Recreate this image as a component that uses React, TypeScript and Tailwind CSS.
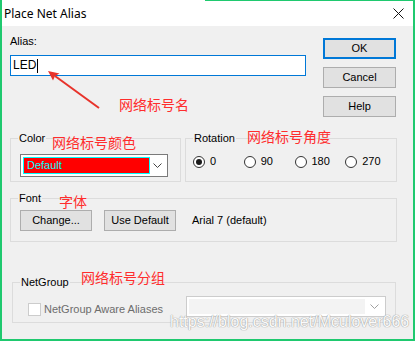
import type { ReactNode } from 'react';

const ui = "font-['Liberation_Sans',Arial,sans-serif] text-[11px] leading-[13px]";
const cjk = "font-['Noto_Sans_CJK_SC',sans-serif] text-[14px] leading-[16px] text-[#ff2d2d]";

function Group({ label, className, children }: { label: string; className: string; children?: ReactNode }) {
  return (
    <div className={`relative border border-[#dcdcdc] ${className}`}>
      <span className="absolute -top-[7px] left-[7px] bg-[#f0f0f0] px-[1px] text-black">{label}</span>
      {children}
    </div>
  );
}

function Btn({ children, primary, className = '' }: { children: ReactNode; primary?: boolean; className?: string }) {
  return (
    <div
      className={`flex h-[21px] items-center justify-center bg-[#e1e1e1] text-black ${
        primary ? 'border-2 border-[#0078d7]' : 'border border-[#adadad]'
      } ${className}`}
    >
      {children}
    </div>
  );
}

function Chevron({ color }: { color: string }) {
  return (
    <svg width="9" height="5" viewBox="0 0 9 5">
      <polyline points="0.5,0.5 4.5,4.5 8.5,0.5" fill="none" stroke={color} strokeWidth="1" />
    </svg>
  );
}

function Radio({ label, checked }: { label: string; checked?: boolean }) {
  return (
    <div className="flex w-[53px] items-center gap-[5px]">
      <div className="flex h-[12px] w-[12px] items-center justify-center rounded-full border border-[#333] bg-white">
        {checked && <div className="h-[6px] w-[6px] rounded-full bg-[#1a1a1a]" />}
      </div>
      <span>{label}</span>
    </div>
  );
}

export default function App() {
  return (
    <div className={`relative flex h-[341px] w-[415px] flex-col border-x-2 border-b-2 border-[#1fc96f] bg-white ${ui}`}>
      {/* 顶部那条只露出一半的绿色边 */}
      <div className="flex h-[1px]">
        <div className="w-[203px] bg-white" />
        <div className="flex-1 bg-[#1fc96f]" />
      </div>

      <div className="flex h-[25px] items-center justify-between pl-[2px] pr-[9px]">
        <span className="font-['Noto_Sans',sans-serif] text-[12px] leading-[16px] text-black">Place Net Alias</span>
        <svg width="11" height="11" viewBox="0 0 11 11">
          <path d="M0.5 0.5 L10.5 10.5 M10.5 0.5 L0.5 10.5" stroke="#111" strokeWidth="1" />
        </svg>
      </div>

      <div className="flex flex-1 flex-col bg-[#f0f0f0] pl-[8px] pt-[9px]">
        <div className="flex items-start">
          <div className="flex w-[296px] flex-col">
            <span className="h-[13px]">Alias:</span>
            <div className="mt-[7px] flex h-[21px] items-center border border-[#0078d7] bg-white pl-[2px] text-[12px]">
              <span>LED</span>
              <span className="ml-[1px] h-[14px] w-[1px] bg-black" />
            </div>
          </div>
          <div className="ml-[17px] flex w-[73px] flex-col">
            <Btn primary className="mt-[3px]">OK</Btn>
            <Btn className="mt-[8px]">Cancel</Btn>
            <Btn className="mt-[8px]">Help</Btn>
          </div>
        </div>

        <div className="mt-[21px] flex gap-[4px]">
          <Group label="Color" className="h-[44px] w-[171px] pl-[9px] pt-[15px]">
            <div className="flex h-[23px] w-[148px] items-center border border-[#7a7a7a] bg-white p-[2px]">
              <div className="flex h-full w-[127px] items-center border border-[#00ffff] bg-[#ff0000] pl-[3px] text-[#00ffff]">
                Default
              </div>
              <div className="flex flex-1 justify-center">
                <Chevron color="#444" />
              </div>
            </div>
          </Group>
          <Group label="Rotation" className="flex h-[44px] w-[212px] items-start pl-[7px] pt-[16px]">
            <Radio label="0" checked />
            <Radio label="90" />
            <Radio label="180" />
            <Radio label="270" />
          </Group>
        </div>

        <Group label="Font" className="mt-[16px] flex h-[44px] w-[387px] items-center pl-[9px]">
          <Btn className="w-[72px]">Change...</Btn>
          <Btn className="ml-[12px] w-[72px]">Use Default</Btn>
          <span className="ml-[16px]">Arial 7 (default)</span>
        </Group>

        <Group label="NetGroup" className="ml-[2px] mt-[40px] flex h-[41px] w-[384px] items-start pl-[15px] pr-[9px]">
          <div className="mt-[20px] flex items-center gap-[3px] text-[#6d6d6d]">
            <div className="h-[13px] w-[13px] border border-[#cccccc] bg-white" />
            <span>NetGroup Aware Aliases</span>
          </div>
          <div className="ml-auto mt-[13px] flex h-[21px] w-[200px] items-center border border-[#cccccc] bg-white p-[2px]">
            <div className="h-full flex-1 bg-[#f3f3f3]" />
            <div className="flex w-[18px] justify-center">
              <Chevron color="#a0a0a0" />
            </div>
          </div>
        </Group>
      </div>

      {/* 红色标注 */}
      <span className={`absolute left-[117px] top-[96px] ${cjk}`}>网络标号名</span>
      <span className={`absolute left-[50px] top-[134px] ${cjk}`}>网络标号颜色</span>
      <span className={`absolute left-[245px] top-[128px] ${cjk}`}>网络标号角度</span>
      <span className={`absolute left-[57px] top-[193px] ${cjk}`}>字体</span>
      <span className={`absolute left-[79px] top-[269px] ${cjk}`}>网络标号分组</span>

      <svg className="pointer-events-none absolute left-0 top-0" width="415" height="341" viewBox="0 0 415 341">
        <line x1="97" y1="108" x2="53" y2="76" stroke="#e8332b" strokeWidth="2" />
        <polygon points="46,71 57.5,73.5 53,76 51,80.5" fill="#e8332b" />
      </svg>

      <span className="absolute left-[168px] top-[313px] font-['Liberation_Sans',Arial,sans-serif] text-[16px] leading-[18px] text-[#fafafa] [text-shadow:0_0_1px_#9a9a9a,0_0_1px_#9a9a9a]">
        https://blog.csdn.net/Mculover666
      </span>
    </div>
  );
}
